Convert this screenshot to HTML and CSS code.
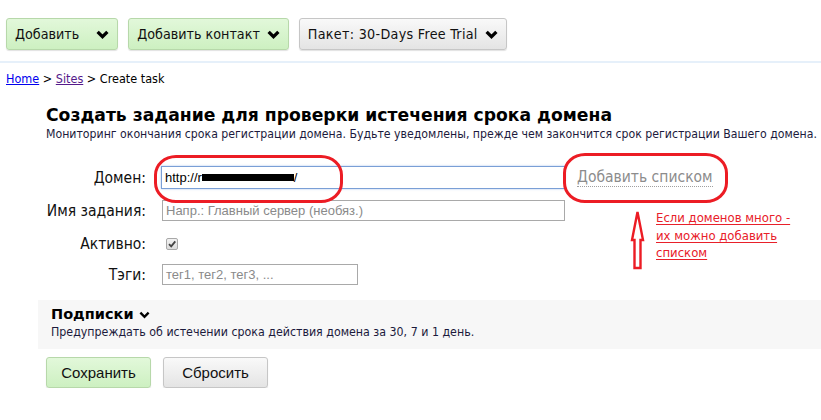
FILE: index.html
```html
<!DOCTYPE html>
<html lang="ru">
<head>
<meta charset="UTF-8" />
<title>Создать задание</title>
<link rel="stylesheet" href="styles.css">
</head>
<body>

<div class="toolbar">
    <button class="tb-btn green">Добавить <span class="gap-lg"></span><svg class="chev" viewBox="0 0 12 8"><polyline points="1.5,1.5 6,6 10.5,1.5"/></svg></button>
    <button class="tb-btn green">Добавить контакт <svg class="chev" viewBox="0 0 12 8"><polyline points="1.5,1.5 6,6 10.5,1.5"/></svg></button>
    <button class="tb-btn gray tb-plan">Пакет: 30-Days Free Trial <svg class="chev" viewBox="0 0 12 8"><polyline points="1.5,1.5 6,6 10.5,1.5"/></svg></button>
</div>

<div class="crumbs">
    <a href="#" class="crumb-link">Home</a> &gt; <a href="#" class="crumb-link visited">Sites</a> &gt; Create task
</div>

<div class="content">
    <h1 class="title">Создать задание для проверки истечения срока домена</h1>
    <p class="subtitle">Мониторинг окончания срока регистрации домена. Будьте уведомлены, прежде чем закончится срок регистрации Вашего домена.</p>

    <div class="form">
        <div class="row row-domain">
            <label class="lbl">Домен:</label>
            <div class="field field-focus">http://r<span class="redact"></span>/</div>
            <a href="#" class="add-list">Добавить списком</a>
        </div>
        <div class="row row-name">
            <label class="lbl">Имя задания:</label>
            <div class="field field-plain placeholder">Напр.: Главный сервер (необяз.)</div>
        </div>
        <div class="row row-active">
            <label class="lbl">Активно:</label>
            <span class="check"><svg viewBox="0 0 10 10"><polyline points="2,5.2 4.2,7.4 8.3,2.4"/></svg></span>
        </div>
        <div class="row row-tags">
            <label class="lbl">Тэги:</label>
            <div class="field field-plain field-short placeholder">тег1, тег2, тег3, ...</div>
        </div>
    </div>
</div>

<div class="subs">
    <div class="subs-title">Подписки <svg class="chev-sm" viewBox="0 0 12 8"><polyline points="1.5,1.5 6,6 10.5,1.5"/></svg></div>
    <div class="subs-text">Предупреждать об истечении срока действия домена за 30, 7 и 1 день.</div>
</div>

<div class="actions">
    <button class="act-btn green">Сохранить</button>
    <button class="act-btn gray">Сбросить</button>
</div>

<!-- annotations drawn on top of the screenshot -->
<div class="oval oval-domain"></div>
<div class="oval oval-list"></div>
<svg class="arrow" viewBox="0 0 20 62">
    <path d="M9.5,2 L15,30 L12.5,30 L12.5,58 L6.5,58 L6.5,30 L4,30 Z"/>
</svg>
<div class="note">
    <span class="note-line">Если доменов много -</span><br>
    <span class="note-line">их можно добавить </span><br>
    <span class="note-line">списком</span>
</div>

</body>
</html>
```

FILE: styles.css
```css
body, html {
    margin: 0;
    padding: 0;
    background: #fff;
    color: #000;
    font-family: "DejaVu Sans", Verdana, sans-serif;
}

/* Top toolbar */
.toolbar {
    display: flex;
    gap: 10px;
    padding: 18px 0 11px 6px;
    border-bottom: 2px solid #e6f0fa;
}

.tb-btn {
    height: 32px;
    display: flex;
    align-items: center;
    padding: 0 8px;
    font-family: "DejaVu Sans Condensed", "DejaVu Sans", sans-serif;
    font-size: 14.2px;
    color: #111;
    border-radius: 3px;
    cursor: pointer;
    box-shadow: 0 1px 1px rgba(0,0,0,0.12);
}

.tb-plan {
    letter-spacing: 0.3px;
}

.green {
    background: linear-gradient(to bottom, #e2f8da, #cdf0c1);
    border: 1px solid #b7d8aa;
}

.gray {
    background: linear-gradient(to bottom, #f9f9f9, #e4e4e4);
    border: 1px solid #c6c6c6;
}

.gap-lg {
    display: inline-block;
    width: 10px;
}

.chev {
    width: 13px;
    height: 9px;
    margin-left: 7px;
    fill: none;
    stroke: #000;
    stroke-width: 3;
}

/* Breadcrumbs */
.crumbs {
    padding: 8px 6px 0;
    font-size: 12.5px;
    font-family: "DejaVu Sans Condensed", "DejaVu Sans", sans-serif;
    line-height: 16px;
}

.crumb-link {
    color: #0000ee;
}

.crumb-link.visited {
    color: #551a8b;
}

/* Main block */
.content {
    padding-left: 46px;
}

.title {
    margin: 17px 0 0;
    font-size: 17.2px;
    line-height: 23px;
    font-weight: bold;
}

.subtitle {
    margin: 0;
    font-family: "DejaVu Sans Condensed", "DejaVu Sans", sans-serif;
    font-size: 12.2px;
    line-height: 15px;
    color: #1c1a3c;
    white-space: nowrap;
}

.form {
    padding-top: 24px;
}

.row {
    display: flex;
    align-items: center;
}

.lbl {
    width: 100px;
    text-align: right;
    font-family: "DejaVu Sans Condensed", "DejaVu Sans", sans-serif;
    font-size: 15.5px;
    color: #111;
    margin-right: 15px;
    white-space: nowrap;
}

.field {
    box-sizing: border-box;
    width: 404px;
    font-family: "Liberation Sans", Arial, sans-serif;
    font-size: 13px;
    padding-left: 3px;
    background: #fff;
}

.field-focus {
    height: 23px;
    line-height: 21px;
    border: 1px solid #7a9fd6;
    box-shadow: 0 0 2px rgba(90,140,220,0.5);
    color: #000;
}

.redact {
    display: inline-block;
    width: 92px;
    height: 7px;
    background: #000;
    vertical-align: 1px;
}

.field-plain {
    height: 21px;
    line-height: 19px;
    border: 1px solid #a9a9a9;
    margin-left: 1px;
    width: 403px;
}

.field-short {
    width: 196px;
}

.placeholder {
    color: #8a8a8a;
}

.add-list {
    margin-left: 12px;
    font-family: "DejaVu Sans Condensed", "DejaVu Sans", sans-serif;
    font-size: 15.5px;
    color: #8c8c8c;
    text-decoration: none;
    border-bottom: 1px dotted #a0a0a0;
    line-height: 17px;
}

.row-domain {
    height: 23px;
}

.row-name {
    margin-top: 11px;
}

.row-active {
    margin-top: 15px;
    height: 16px;
}

.row-tags {
    margin-top: 12px;
}

.check {
    display: inline-block;
    box-sizing: border-box;
    width: 12px;
    height: 12px;
    margin-left: 5px;
    border: 1px solid #a8a8a8;
    border-radius: 2px;
    background: linear-gradient(to bottom, #f2f2f2, #dcdcdc);
}

.check svg {
    display: block;
    width: 10px;
    height: 10px;
    fill: none;
    stroke: #444;
    stroke-width: 1.8;
}

/* Subscriptions panel */
.subs {
    margin: 15px 0 0 38px;
    background: #f7f7f7;
    padding: 5px 13px 9px;
}

.subs-title {
    font-size: 14.5px;
    font-weight: bold;
    line-height: 18px;
}

.chev-sm {
    width: 11px;
    height: 8px;
    fill: none;
    stroke: #000;
    stroke-width: 2.6;
}

.subs-text {
    margin-top: 2px;
    font-family: "DejaVu Sans Condensed", "DejaVu Sans", sans-serif;
    font-size: 12.3px;
    line-height: 15px;
    color: #1c1a3c;
}

.actions {
    display: flex;
    gap: 12px;
    padding: 8px 0 0 46px;
}

.act-btn {
    box-sizing: border-box;
    width: 105px;
    height: 31px;
    font-family: "Liberation Sans", Arial, sans-serif;
    font-size: 15px;
    color: #111;
    border-radius: 3px;
    box-shadow: 0 1px 1px rgba(0,0,0,0.12);
    cursor: pointer;
}

/* Red annotation marks */
.oval {
    position: absolute;
    box-sizing: border-box;
    border: 3px solid #ec1c24;
    border-radius: 22px / 20px;
}

.oval-domain {
    left: 154px;
    top: 155px;
    width: 189px;
    height: 48px;
}

.oval-list {
    left: 563px;
    top: 153px;
    width: 165px;
    height: 50px;
}

.arrow {
    position: absolute;
    left: 628px;
    top: 210px;
    width: 20px;
    height: 62px;
}

.arrow path {
    fill: #fff;
    stroke: #ec1c24;
    stroke-width: 2.4;
    stroke-linejoin: miter;
}

.note {
    position: absolute;
    left: 656px;
    top: 209px;
    font-family: "DejaVu Sans Condensed", "DejaVu Sans", sans-serif;
    font-size: 13px;
    line-height: 17.5px;
    color: #e8202a;
}

.note-line {
    text-decoration: underline;
    text-underline-offset: 2px;
}
```
